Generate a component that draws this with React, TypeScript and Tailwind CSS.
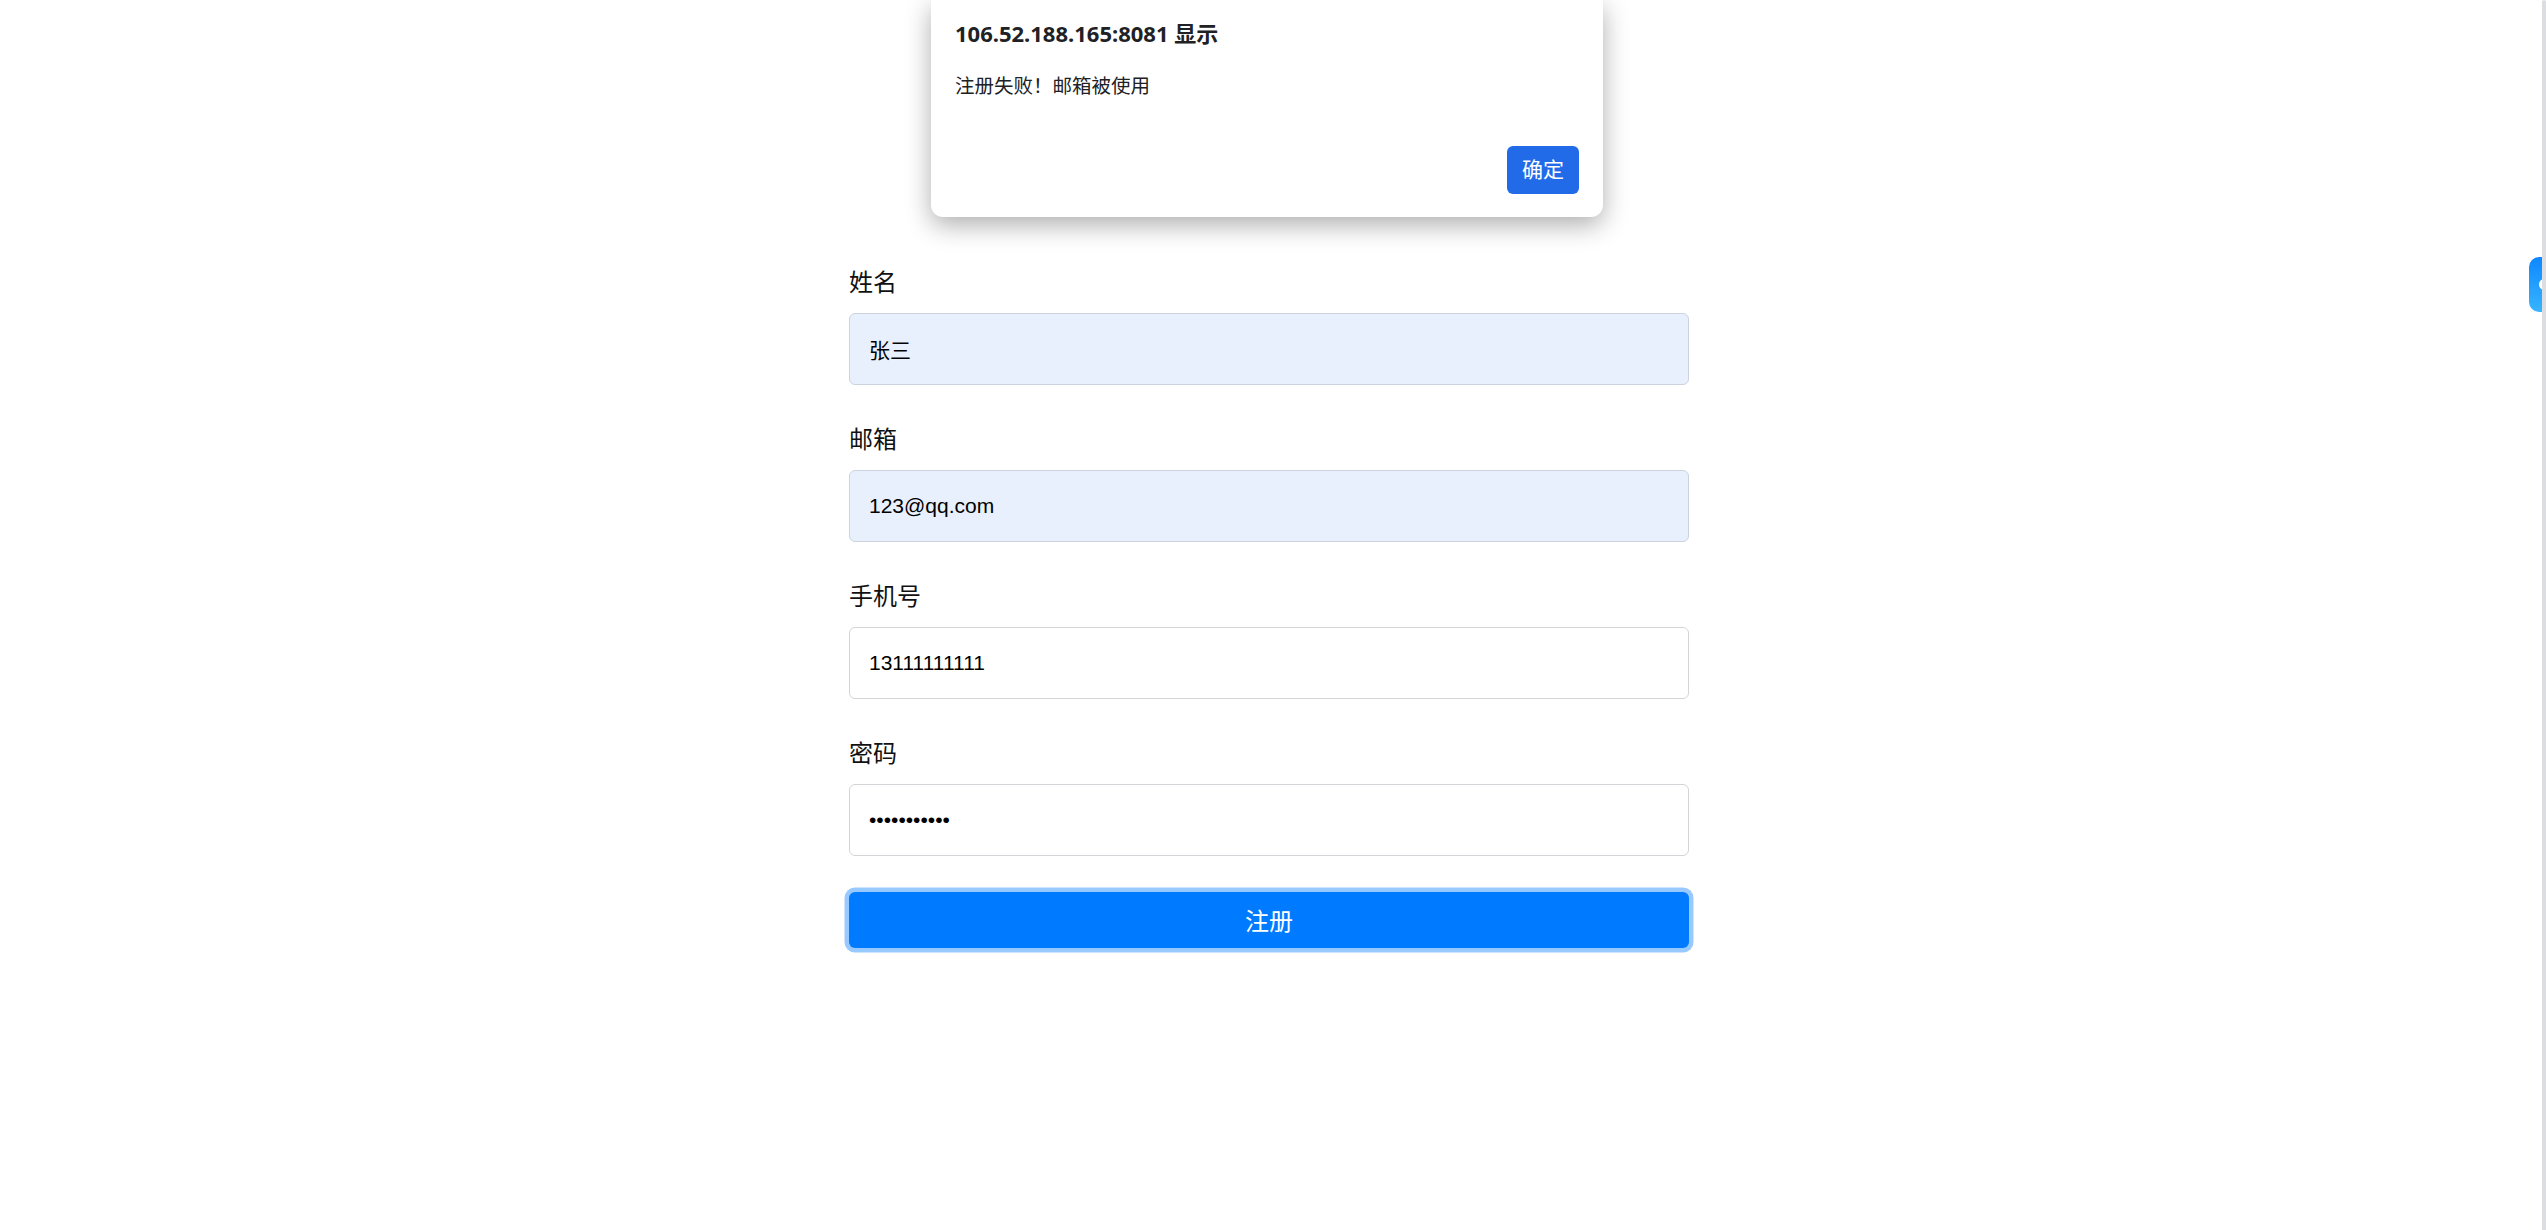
type Field = {
  id: string;
  label: string;
  type: string;
  value: string;
  autofilled?: boolean;
};

const fields: Field[] = [
  { id: "name", label: "姓名", type: "text", value: "张三", autofilled: true },
  { id: "email", label: "邮箱", type: "email", value: "123@qq.com", autofilled: true },
  { id: "phone", label: "手机号", type: "text", value: "13111111111" },
  { id: "password", label: "密码", type: "password", value: "12345678901" },
];

function AlertDialog() {
  return (
    <div className="absolute left-1/2 top-0 z-20 ml-[-2px] w-[672px] -translate-x-1/2 rounded-b-[12px] bg-white px-[24px] pb-[23px] pt-[18px] shadow-[0_8px_26px_rgba(0,0,0,0.32)] font-['Noto_Sans','Noto_Sans_CJK_SC',sans-serif] text-[#202124]">
      <div className="text-[22px] font-bold leading-[30px]">106.52.188.165:8081 显示</div>
      <div className="mt-[24px] text-[19.5px] leading-[28px]">注册失败！邮箱被使用</div>
      <div className="mt-[46px] flex justify-end">
        <button className="h-[48px] w-[72px] rounded-[6px] bg-[#216be8] text-[21px] text-white">确定</button>
      </div>
    </div>
  );
}

function FormField({ field }: { field: Field }) {
  return (
    <div>
      <label
        htmlFor={field.id}
        className="mb-[14px] block text-[24px] leading-[36px] text-[#111]"
      >
        {field.label}
      </label>
      <input
        id={field.id}
        type={field.type}
        defaultValue={field.value}
        className={
          "block h-[72px] w-full rounded-[6px] border px-[19px] text-[21px] text-black outline-none font-['Liberation_Sans','Noto_Sans_CJK_SC',sans-serif] " +
          (field.autofilled ? "border-[#cdd3dd] bg-[#e8f0fe]" : "border-[#d3d5d9] bg-white")
        }
      />
    </div>
  );
}

export default function App() {
  return (
    <div className="relative flex min-h-[1230px] w-full overflow-hidden bg-white font-['Noto_Sans_CJK_SC','Noto_Sans',sans-serif]">
      <main className="relative flex-1">
        <AlertDialog />
        <form className="mx-auto flex w-[840px] flex-col gap-[35px] pt-[263px]">
          {fields.map(f => (
            <FormField key={f.id} field={f} />
          ))}
          <button
            type="button"
            className="mt-[1px] h-[56px] w-full rounded-[6px] bg-[#007bff] text-[24px] text-white shadow-[0_0_0_4.5px_rgba(0,123,255,0.4)]"
          >
            注册
          </button>
        </form>
      </main>
      <aside className="relative flex w-[8px] justify-end">
        <div className="absolute right-[4px] top-[257px] z-10 h-[55px] w-[13px] overflow-hidden rounded-l-[10px] bg-gradient-to-b from-[#0d87ff] to-[#38b4ff]">
          <div className="absolute left-[10px] top-[22px] h-[11px] w-[11px] rounded-full border-[3px] border-white" />
        </div>
        <div className="w-[4px] rounded-t-[3px] bg-[#dcdde0]" />
      </aside>
    </div>
  );
}
